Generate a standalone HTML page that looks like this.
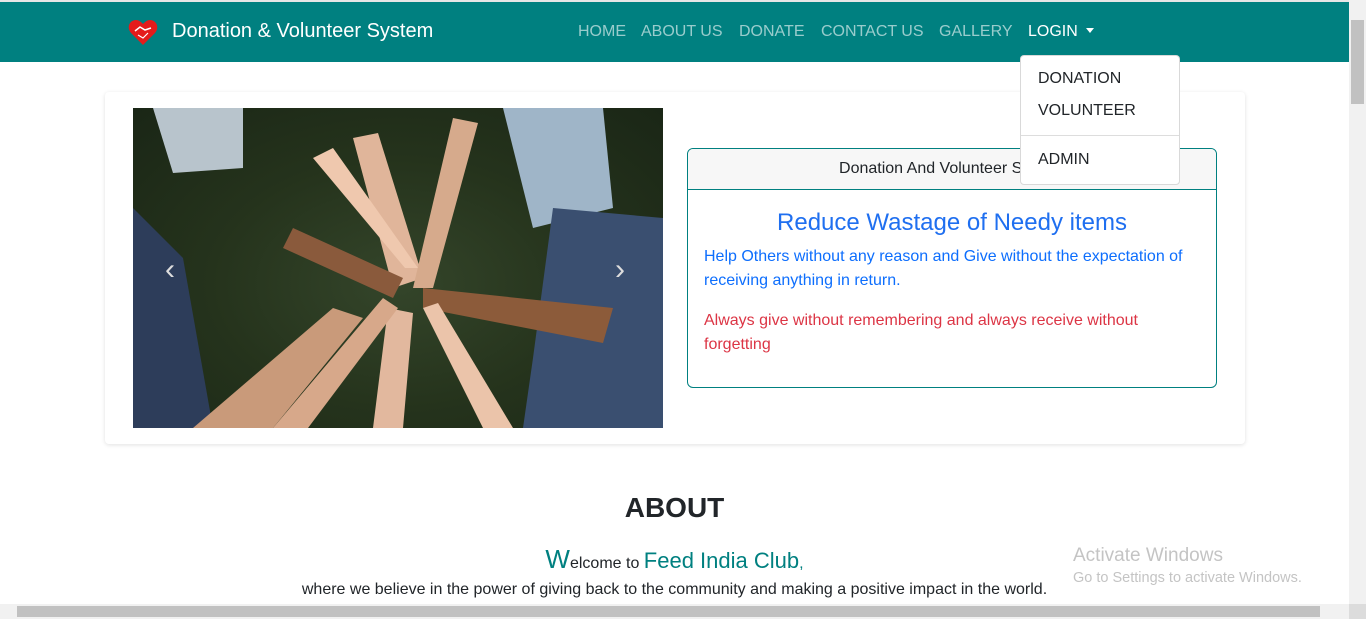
<!DOCTYPE html>
<html><head><meta charset="utf-8"><style>
*{box-sizing:border-box;margin:0;padding:0}
body{width:1366px;height:619px;overflow:hidden;position:relative;background:#fff;font-family:"Liberation Sans",Arial,sans-serif;}
.top{position:absolute;left:0;top:0;width:1349px;height:2px;background:#e6e6e6}
.nav{position:absolute;left:0;top:2px;width:1349px;height:60px;background:#008080}
.brand{position:absolute;left:172px;top:18px;color:#fff;font-size:20px}
.nav a{position:absolute;top:21px;font-size:16px;color:rgba(255,255,255,.6);text-decoration:none}
.dd{position:absolute;left:1020px;top:55px;width:160px;height:130px;background:#fff;border:1px solid rgba(0,0,0,.15);border-radius:4px;font-size:16px;color:#212529;z-index:5}
.dd div{position:absolute;left:17px}
.card{position:absolute;left:105px;top:92px;width:1140px;height:352px;background:#fff;box-shadow:0 1px 4px rgba(0,0,0,.12);border-radius:4px}
.img{position:absolute;left:133px;top:108px;width:530px;height:320px;overflow:hidden;background:radial-gradient(ellipse at 50% 55%,#34452a 0%,#25331c 50%,#1a2616 100%)}
.box{position:absolute;left:687px;top:148px;width:530px;height:240px;border:1px solid #008080;border-radius:6px;overflow:hidden}
.box .h{height:41px;background:#f7f7f7;border-bottom:1px solid #008080;text-align:center;font-size:16px;line-height:40px;color:#212529}
.sb{position:absolute;right:0;top:0;width:17px;height:619px;background:#f1f1f1}
.hb{position:absolute;left:0;bottom:0;width:1366px;height:15px;background:#f1f1f1}
</style></head><body>
<div class="top"></div>
<div class="nav">
<svg style="position:absolute;left:128px;top:17px" width="30" height="27" viewBox="0 0 30 27"><path d="M15 26 L3 14 C-2 8 2 1 8 1 C11 1 13 3 15 5 C17 3 19 1 22 1 C28 1 32 8 27 14 Z" fill="#e41b1b"/><path d="M7 12 L12 8 L17 11 L23 9" stroke="#fff" stroke-width="1.5" fill="none"/><path d="M10 16 L15 19 L20 14" stroke="#fff" stroke-width="1.2" fill="none"/></svg>
<div class="brand">Donation &amp; Volunteer System</div>
<a style="left:578px">HOME</a><a style="left:641px">ABOUT US</a><a style="left:739px">DONATE</a><a style="left:821px">CONTACT US</a><a style="left:939px">GALLERY</a>
<a style="left:1028px;color:#fff">LOGIN <span style="display:inline-block;border-top:5px solid #fff;border-left:4px solid transparent;border-right:4px solid transparent;vertical-align:3px;margin-left:4px"></span></a>
</div>
<div class="dd"><div style="top:14px">DONATION</div><div style="top:46px">VOLUNTEER</div><hr style="position:absolute;left:0;top:79px;width:158px;border:0;border-top:1px solid #ddd"><div style="top:95px">ADMIN</div></div>
<div class="card"></div>
<div class="img">
<svg width="530" height="320" viewBox="0 0 530 320">
<path d="M20 0 L110 0 L110 60 L40 65Z" fill="#b8c4cc"/>
<path d="M370 0 L470 0 L480 100 L400 120Z" fill="#9fb5c8"/>
<path d="M0 100 L50 150 L80 320 L0 320Z" fill="#2d3d5a"/>
<path d="M420 100 L530 110 L530 320 L390 320 L400 250Z" fill="#3a4f70"/>
<path d="M200 200 L60 320 L140 320 L230 210Z" fill="#c99a7a"/>
<path d="M260 180 L220 30 L245 25 L290 170Z" fill="#e0b59a"/>
<path d="M280 180 L320 10 L345 15 L300 180Z" fill="#d6aa8c"/>
<path d="M260 190 L150 140 L160 120 L270 170Z" fill="#8a5a3c"/>
<path d="M290 180 L480 200 L470 235 L290 200Z" fill="#8c5b3a"/>
<path d="M255 200 L240 320 L270 320 L280 205Z" fill="#e2b89e"/>
<path d="M290 200 L350 320 L380 320 L305 195Z" fill="#ebc4aa"/>
<path d="M250 190 L140 320 L175 320 L265 200Z" fill="#d7a88a"/>
<path d="M272 160 L180 50 L200 40 L285 160Z" fill="#efc8ae"/>
</svg>
<span style="position:absolute;left:32px;top:145px;color:#ddd;font-size:30px">&#8249;</span>
<span style="position:absolute;left:482px;top:145px;color:#ddd;font-size:30px">&#8250;</span>
</div>
<div class="box"><div class="h">Donation And Volunteer System</div>
<div style="text-align:center;color:#1f6ff0;font-size:24px;margin-top:19px">Reduce Wastage of Needy items</div>
<p style="color:#0d6efd;font-size:16px;line-height:24px;margin:8px 16px 0">Help Others without any reason and Give without the expectation of receiving anything in return.</p>
<p style="color:#dc3545;font-size:16px;line-height:24px;margin:16px 16px 0">Always give without remembering and always receive without forgetting</p>
</div>
<div style="position:absolute;left:0;width:1349px;top:492px;text-align:center;font-size:28px;font-weight:bold;color:#212529">ABOUT</div>
<div style="position:absolute;left:0;width:1349px;top:544px;text-align:center;color:#008080;font-size:16px"><span style="font-size:26px">W</span><span style="color:#212529">elcome to</span> <span style="font-size:22px">Feed India Club</span>,</div>
<div style="position:absolute;left:0;width:1349px;top:581px;text-align:center;font-size:16px;color:#212529">where we believe in the power of giving back to the community and making a positive impact in the world.</div>
<div style="position:absolute;left:1073px;top:545px;color:#c4c4c4;font-size:19px">Activate Windows</div>
<div style="position:absolute;left:1073px;top:570px;color:#c4c4c4;font-size:14.5px">Go to Settings to activate Windows.</div>
<div class="sb"><div style="position:absolute;left:2px;top:20px;width:13px;height:84px;background:#c1c1c1"></div></div>
<div class="hb"><div style="position:absolute;left:17px;top:2px;width:1303px;height:11px;background:#c1c1c1"></div><div style="position:absolute;right:0;top:0;width:17px;height:15px;background:#dcdcdc"></div></div>
</body></html>
